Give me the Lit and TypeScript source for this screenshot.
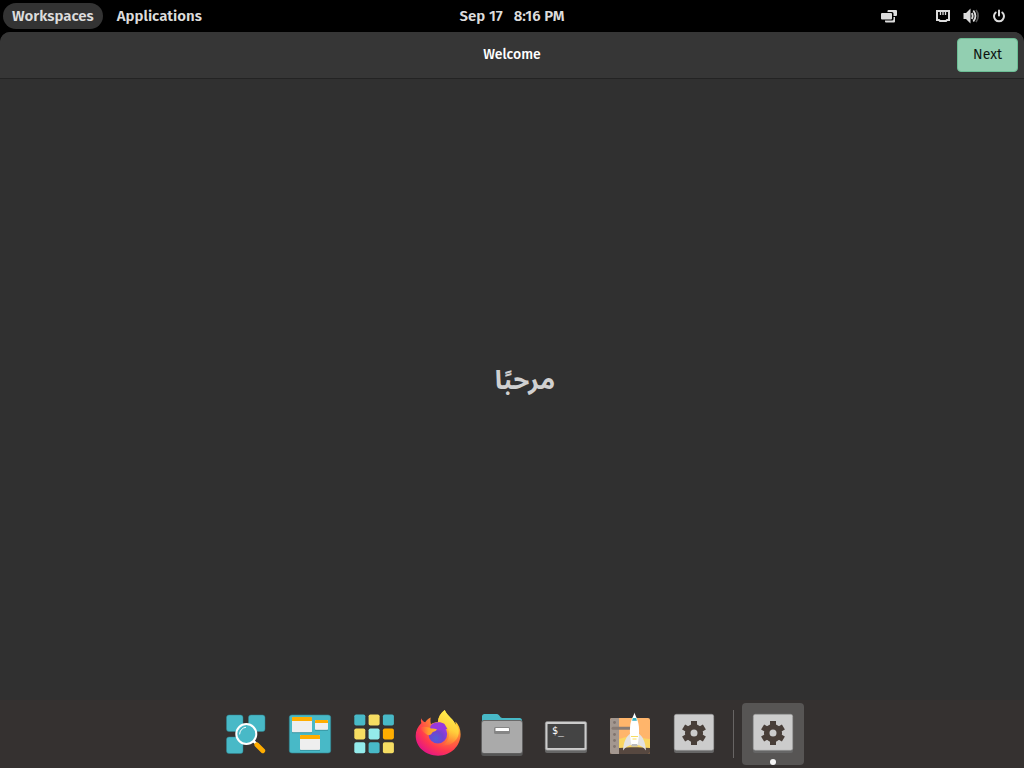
import { LitElement, html, svg, css, TemplateResult } from "lit";
import { customElement } from "lit/decorators.js";

const teal = "#48b9c7";
const yellow = "#f6dd62";
const cyan = "#94ebeb";
const orange = "#ffad00";

const cells = [teal, yellow, teal, yellow, cyan, orange, cyan, teal, yellow];

const launcher = svg`
  <g fill="${teal}" stroke="#2f8793" stroke-width=".5">
    <rect x="11.5" y="12" width="16.5" height="16.5" rx="2.5"/>
    <rect x="33.5" y="12" width="16.5" height="16.5" rx="2.5"/>
    <rect x="11.5" y="34" width="16.5" height="16.5" rx="2.5"/>
  </g>
  <path d="M38 37.5l4 4" stroke="#fff" stroke-width="2.6"/>
  <path d="M41.8 41.8l6 6" stroke="${orange}" stroke-width="4.8" stroke-linecap="round"/>
  <circle cx="31.3" cy="31" r="10" fill="${teal}" stroke="#fff" stroke-width="2"/>
  <path d="M24.6 31a6.8 6.8 0 0 1 6-6.7" fill="none" stroke="#fff" stroke-width="1" stroke-linecap="round"/>`;

const workspaces = svg`
  <rect x="10.3" y="12" width="41.4" height="38" rx="2.5" fill="${teal}" stroke="#2f8793" stroke-width=".6"/>
  <g fill="#eee"><rect x="13" y="14.5" width="20" height="15" rx="1"/><rect x="36" y="17" width="13" height="10" rx="1"/><rect x="21" y="32" width="20" height="15" rx="1"/></g>
  <g fill="${orange}"><path d="M13 18v-3a1 1 0 0 1 1-1h18a1 1 0 0 1 1 1v3zM36 20v-2a1 1 0 0 1 1-1h11a1 1 0 0 1 1 1v2zM21 36v-3a1 1 0 0 1 1-1h18a1 1 0 0 1 1 1v3z"/></g>
  <path d="M13 29.7h20M36 27.3h13M21 47.4h20" stroke="#2f8793" stroke-width=".7"/>`;

const applications = svg`${cells.map((c, i) => svg`
  <rect x="${11.3 + (i % 3) * 14.3}" y="${11.5 + Math.floor(i / 3) * 13.9}" width="11" height="11" rx="1.8" fill="${c}"/>`)}`;

const firefox = svg`
  <defs>
    <radialGradient id="fa" cx=".8" cy=".12" r="1"><stop offset="0" stop-color="#ffef45"/><stop offset=".3" stop-color="#ffbd2f"/><stop offset=".55" stop-color="#ff7139"/><stop offset=".78" stop-color="#ff3750"/><stop offset="1" stop-color="#e31587"/></radialGradient>
    <radialGradient id="fb" cx=".4" cy=".75" r=".85"><stop offset="0" stop-color="#4f60d8"/><stop offset=".45" stop-color="#7542d0"/><stop offset="1" stop-color="#a53be8"/></radialGradient>
    <linearGradient id="fc" x1=".6" y1="0" x2=".3" y2="1"><stop offset="0" stop-color="#fff44f"/><stop offset=".5" stop-color="#ffd03c"/><stop offset="1" stop-color="#ff9034" stop-opacity=".1"/></linearGradient>
    <linearGradient id="fd" x1="0" y1="0" x2="1" y2="0"><stop offset="0" stop-color="#ff7a35" stop-opacity="0"/><stop offset=".5" stop-color="#ff9a2b"/><stop offset="1" stop-color="#ffb52f"/></linearGradient>
  </defs>
  <path d="M14.2 15.2c-.5 2-.3 3.600.2 4.900C10.600 23.700 8.700 28.400 8.700 32.800c0 11 9.600 19.900 22.400 19.900 12.800 0 22.500-9.600 22.500-21.400 0-5.400-2-9.900-5.200-12.900.2 1.300.2 2.500.1 3.400-1.500-5.300-7.600-7.900-10.800-14.800-4 3-6.500 7-6.800 12-2.800.1-5.100.9-6.900 2.300-.6-2-.8-4.300-.3-6.700-2.800 1.100-4.500 3-5.500 4.700-1.800-.6-3.200-2-4-4.100z" fill="url(#fa)"/>
  <path d="M37.700 7c-4 3-6.500 7-6.800 12 5 .5 8.700 3.400 10.400 7.700 2.400 6.200-.6 13-6.500 15.700 9.700 1.200 17.400-5.800 17-14.500-.1-2.400-.9-4.500-3.300-6.100C47 16.500 40.900 13.900 37.700 7z" fill="url(#fc)"/>
  <circle cx="30.800" cy="31" r="9.400" fill="url(#fb)"/>
  <path d="M23.500 22.800c3.500-4.300 10.200-4.300 14-1.800l2.800 5-9 1.500-8-2z" fill="#9839dc"/>
  <path d="M13 24.500c4-1.500 8.500-.9 11 1.100 2.600.1 4.600.2 5.900.7-.5 1.800-3.400 2.400-4.600 3.100-.8.900-.7 1.600-2 2.300l-2.100.5c-2.300-1.200-6.700-4-8.200-7.700z" fill="url(#fd)"/>`;

const files = svg`
  <path d="M11 20v-6.500A2.500 2.500 0 0 1 13.500 11H26c2.500 0 2.800 4 5.500 4h17a2.500 2.500 0 0 1 2.500 2.500V20z" fill="${teal}"/>
  <rect x="10.300" y="19" width="41.400" height="34" rx="2.500" fill="#555"/>
  <rect x="10.300" y="17" width="41.400" height="33.500" rx="2.500" fill="#6a6a6a"/>
  <rect x="11" y="18" width="40" height="32" rx="2" fill="#aaa"/>
  <rect x="23" y="24" width="16" height="7" rx="1.500" fill="#858585"/>
  <rect x="24.500" y="25" width="13.500" height="3" rx=".5" fill="#fff"/>`;

const terminal = svg`
  <rect x="10" y="20" width="42" height="30" rx="2" fill="#666"/>
  <rect x="10.300" y="18.500" width="41.400" height="28.800" rx="1.800" fill="#ccc" stroke="#858585" stroke-width=".6"/>
  <rect x="12.500" y="21" width="37" height="24" rx=".5" fill="#444"/>
  <text x="17" y="31" class="prompt">$_</text>`;

const rocket = svg`
  <clipPath id="ra"><rect x="11" y="15" width="40" height="36" rx="2"/></clipPath>
  <g clip-path="url(#ra)">
    <path d="M11 15h40v36H11z" fill="#ffb56b"/>
    <path d="M20 36c6-1 7-3 14-3 8 0 9 3 17 3v10H20z" fill="#f9d562"/>
    <path d="M20 45c12-1 18-1 31 0v6H11v-6z" fill="#574840"/>
    <path d="M11 15h9v36h-9z" fill="#a3978f"/>
    <path d="M14 25.300h20" stroke="#887b74" stroke-width="3" stroke-linecap="round"/>
    <g fill="#81756f"><circle cx="15.500" cy="19.500" r="1.400"/><circle cx="15.500" cy="31.500" r="1.400"/><circle cx="15.500" cy="37.500" r="1.400"/><circle cx="15.500" cy="43.500" r="1.400"/></g>
  </g>
  <path d="M32 30c-5 3.500-7.500 9-8 17.500 2.500-3.500 5-5 9-5.500zM39 30c5 3.500 7.500 9 8 17.500-2.500-3.500-5-5-9-5.500z" fill="#e2e2e2"/>
  <path d="M35.500 9.500c-.6 3-3.700 7-4.400 14-.6 6 .1 13 1.400 18.500h6c1.300-5.500 2-12.500 1.400-18.500-.7-7-3.800-11-4.400-14z" fill="#fff"/>
  <path d="M33.800 15h3.400l.7 2.800h-4.800z" fill="#35afc0"/>
  <path d="M32 33.500h7M33.500 36h4" stroke="${yellow}" stroke-width="1"/>
  <path d="M33 41h5l1 2.500h-7z" fill="#bbb"/>`;

const settings = svg`
  <rect x="11" y="14" width="40" height="36" rx="2" fill="#666"/>
  <rect x="11.300" y="11.300" width="39.400" height="36" rx="2" fill="#ccc" stroke="#969696" stroke-width=".6"/>
  <g fill="#483e38">
    ${[0, 60, 120, 180, 240, 300].map((a) => svg`<path d="M28 18h6v6h-6z" transform="rotate(${a} 31 30)"/>`)}
  </g>
  <circle cx="31" cy="30" r="6.300" fill="none" stroke="#483e38" stroke-width="5.600"/>`;

const dockItems: [string, TemplateResult][] = [
  ["Launcher", launcher],
  ["Workspaces", workspaces],
  ["Applications", applications],
  ["Firefox", firefox],
  ["Files", files],
  ["Terminal", terminal],
  ["Pop!_Shop", rocket],
  ["Settings", settings],
];

@customElement("app-root")
export class AppRoot extends LitElement {
  static styles = css`
    :host {
      display: flex;
      flex-direction: column;
      min-height: 100vh;
      background: #000;
      color: #dcdcdc;
      font-family: "Fira Sans", Roboto, "Noto Sans", sans-serif;
    }
    button {
      font: inherit;
      color: inherit;
      background: none;
      border: 0;
      margin: 0;
      padding: 0;
    }
    .panel {
      display: grid;
      grid-template-columns: 1fr auto 1fr;
      align-items: center;
      height: 32px;
      padding: 0 3px;
      font-size: 15px;
      line-height: 26px;
      font-weight: 600;
    }
    .menus {
      display: flex;
      gap: 5px;
    }
    .menus button {
      padding: 0 9px;
      border-radius: 13px;
    }
    .menus .on {
      background: #333;
    }
    .clock {
      white-space: pre;
    }
    .tray {
      display: flex;
      justify-content: flex-end;
      align-items: center;
      gap: 12px;
      padding-right: 14px;
    }
    .tray button,
    .tray svg {
      display: block;
    }
    .tray .tiling {
      margin-right: 25px;
    }
    .window {
      flex: 1;
      display: flex;
      flex-direction: column;
      background: #303030;
      border-radius: 10px 10px 0 0;
      overflow: hidden;
    }
    .header {
      display: grid;
      grid-template-columns: 1fr auto 1fr;
      align-items: center;
      height: 46px;
      padding: 0 6px;
      background: #363636;
      border-bottom: 1px solid #232323;
    }
    .title {
      grid-column: 2;
      margin: 0;
      font-size: 14px;
      line-height: 20px;
      font-weight: 500;
      color: #fff;
    }
    .header .next {
      justify-self: end;
      padding: 0 15px;
      height: 34px;
      font-size: 14px;
      line-height: 20px;
      color: #0e1512;
      background: #92cfb1;
      border: 1px solid #6cbd95;
      border-radius: 4px;
    }
    .content {
      flex: 1;
      display: flex;
      align-items: center;
      justify-content: center;
      padding: 0 0 18px 26px;
    }
    .greeting {
      margin: 0;
      font-family: "Noto Sans Arabic", "Noto Sans", "DejaVu Sans", sans-serif;
      font-size: 26px;
      line-height: 40px;
      font-weight: 700;
      color: #d0d0d0;
    }
    .dock {
      display: flex;
      align-items: center;
      justify-content: center;
      gap: 2px;
      height: 68px;
      padding-right: 5px;
      background: #353130;
    }
    .dock svg {
      display: block;
      width: 62px;
      height: 62px;
    }
    .dock .active {
      background: #575554;
      border-radius: 4px;
    }
    .separator {
      width: 1px;
      height: 48px;
      margin: 0 6px;
      background: #686564;
    }
    .prompt {
      font: 10px "DejaVu Sans Mono", monospace;
      fill: #fff;
    }
  `;

  render() {
    return html`
      <header class="panel">
        <nav class="menus">
          <button class="on">Workspaces</button>
          <button>Applications</button>
        </nav>
        <button class="clock">Sep 17   8:16 PM</button>
        <div class="tray">
          <button class="tiling" aria-label="Tiling">
            <svg width="17" height="16" viewBox="0 0 17 16" fill="#dcdcdc">
              <path d="M7.500 2H15a1 1 0 0 1 1 1v4a1 1 0 0 1-1 1h-2.500V5.500a1.500 1.500 0 0 0-1.500-1.500H6.500V3a1 1 0 0 1 1-1z"/>
              <rect y="5" width="11" height="6.500" rx="1"/>
              <path d="M12.500 9H14v4.500a1 1 0 0 1-1 1H5a1 1 0 0 1-1-1v-1h7a1.500 1.500 0 0 0 1.500-1.500z"/>
            </svg>
          </button>
          <button aria-label="Network">
            <svg width="16" height="16" viewBox="0 0 16 16" fill="none" stroke="#dcdcdc" stroke-width="2">
              <path d="M2 3h12v9h-2l-1 1H5l-1-1H2z"/>
              <path d="M5.500 3v4M8 3v4M10.500 3v4" stroke-width="1.300"/>
            </svg>
          </button>
          <button aria-label="Volume">
            <svg width="16" height="16" viewBox="0 0 16 16" fill="none" stroke="#dcdcdc" stroke-width="1.800">
              <path d="M.5 5H3l4.500-4.500v15L3 11H.5z" fill="#dcdcdc" stroke="none"/>
              <path d="M8.800 5c1.200 2 1.200 4 0 6"/>
              <path d="M10.300 2.500c2.600 3.300 2.600 7.700 0 11"/>
              <path d="M13 2c2.800 3.500 2.800 8.500 0 12" stroke="#555"/>
            </svg>
          </button>
          <button aria-label="Power">
            <svg width="16" height="16" viewBox="0 0 16 16" fill="none" stroke="#dcdcdc" stroke-width="2" stroke-linecap="round">
              <path d="M8 2.500v5M4.700 4.500a5 5 0 1 0 6.600 0"/>
            </svg>
          </button>
        </div>
      </header>
      <main class="window">
        <div class="header">
          <h1 class="title">Welcome</h1>
          <button class="next">Next</button>
        </div>
        <section class="content">
          <h2 class="greeting" lang="ar" dir="rtl">مرحبًا</h2>
        </section>
        <nav class="dock">
          ${dockItems.map(([name, art]) => html`<button aria-label=${name}><svg viewBox="0 0 62 62">${art}</svg></button>`)}
          <div class="separator"></div>
          <button class="active" aria-label="Initial Setup">
            <svg viewBox="0 0 62 62">${settings}<circle cx="31" cy="59" r="3" fill="#f4f4f4"/></svg>
          </button>
        </nav>
      </main>
    `;
  }
}
